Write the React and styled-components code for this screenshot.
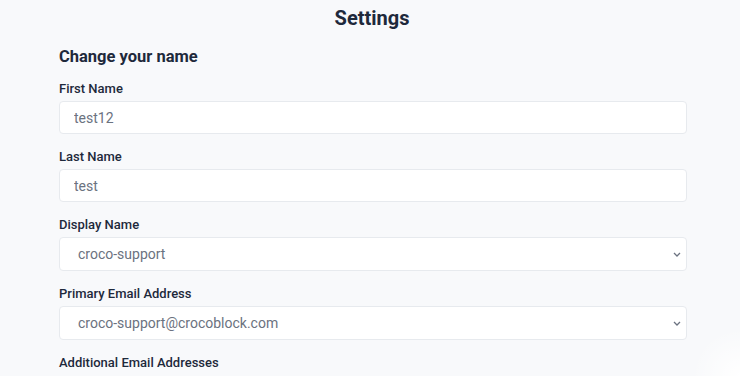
import styled, { createGlobalStyle } from "styled-components";

const GlobalStyle = createGlobalStyle`
  body {
    margin: 0;
    background: #f8f9fb;
    font-family: Roboto, "Liberation Sans", sans-serif;
    color: #1f2937;
  }
`;

const fields = [
  { label: "First Name", type: "input", value: "test12" },
  { label: "Last Name", type: "input", value: "test" },
  { label: "Display Name", type: "select", value: "croco-support" },
  { label: "Primary Email Address", type: "select", value: "croco-support@crocoblock.com" },
];

const Chevron = () => (
  <ChevronIcon width="8" height="5" viewBox="0 0 8 5">
    <path d="M1 1l3 3 3-3" fill="none" stroke="#6b7280" strokeWidth="1.3" />
  </ChevronIcon>
);

const App = () => {
  return (
    <>
      <GlobalStyle />
      <Page>
        <Title>Settings</Title>
        <Form>
          <SectionTitle>Change your name</SectionTitle>
          {fields.map((f) => (
            <Field key={f.label}>
              <Label>{f.label}</Label>
              {f.type === "input" ? (
                <Input defaultValue={f.value} />
              ) : (
                <SelectWrap>
                  <Select defaultValue={f.value}>
                    <option value={f.value}>{f.value}</option>
                  </Select>
                  <Chevron />
                </SelectWrap>
              )}
            </Field>
          ))}
          <Label>Additional Email Addresses</Label>
        </Form>
      </Page>
    </>
  );
};

export default App;

const Page = styled.div`
  height: 376px;
  overflow: hidden;
  padding-top: 6px;
  box-sizing: border-box;
  background: radial-gradient(circle at 100% 100%, #ffffff 0, rgba(255, 255, 255, 0) 48px), #f8f9fb;
`;

const Title = styled.h1`
  margin: 0;
  text-align: center;
  font-size: 20px;
  font-weight: 700;
  line-height: 24px;
  color: #1e293b;
  padding-left: 4px;
`;

const Form = styled.div`
  width: 628px;
  margin-left: 59px;
  display: flex;
  flex-direction: column;
`;

const SectionTitle = styled.h2`
  margin: 15px 0 12px;
  font-size: 16.5px;
  font-weight: 700;
  line-height: 24px;
  color: #1e293b;
`;

const Field = styled.div`
  display: flex;
  flex-direction: column;
  gap: 4px;
  margin-bottom: 15px;
`;

const Label = styled.label`
  font-size: 13px;
  font-weight: 500;
  line-height: 16px;
  color: #1e293b;
`;

const Input = styled.input`
  box-sizing: border-box;
  height: 33px;
  width: 100%;
  padding: 0 14px;
  border: 1px solid #e7eaee;
  border-radius: 4px;
  background: #fff;
  font-family: Roboto, "Liberation Sans", sans-serif;
  font-size: 14px;
  color: #6b7280;
  outline: none;
`;

const SelectWrap = styled.div`
  position: relative;
`;

const Select = styled.select`
  box-sizing: border-box;
  display: block;
  height: 34px;
  width: 100%;
  padding: 0 18px;
  border: 1px solid #e7eaee;
  border-radius: 4px;
  background: #fff;
  appearance: none;
  font-family: Roboto, "Liberation Sans", sans-serif;
  font-size: 14px;
  color: #6b7280;
  outline: none;
`;

const ChevronIcon = styled.svg`
  position: absolute;
  right: 6px;
  top: 15px;
  pointer-events: none;
`;
